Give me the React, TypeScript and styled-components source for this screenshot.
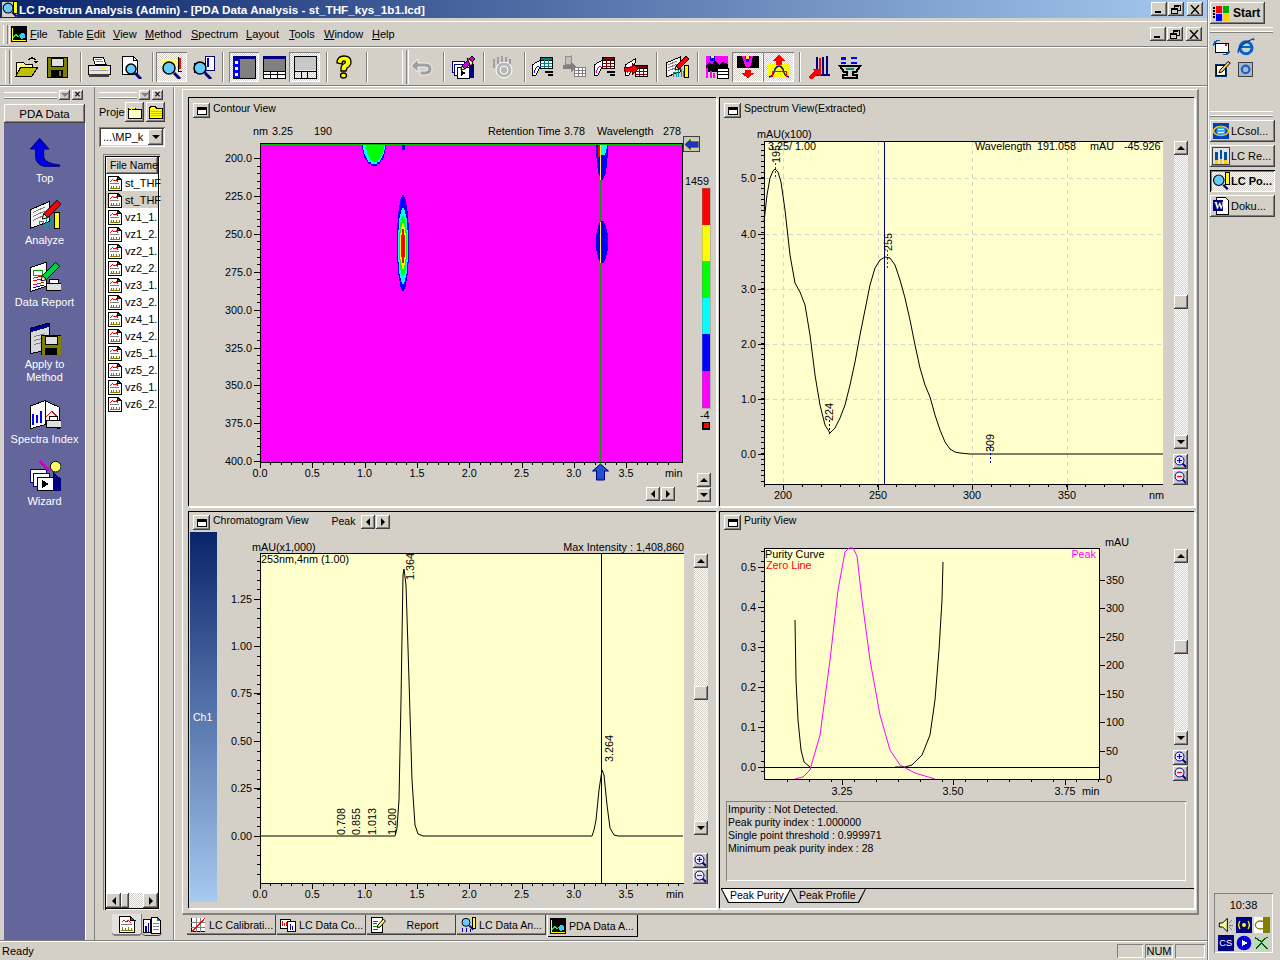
import React from "react";
import styled, { createGlobalStyle } from "styled-components";

const FACE = "#d4d0c8";
const SHADOW = "#808080";
const BEVEL = "inset -1px -1px #404040, inset 1px 1px #fff, inset -2px -2px #808080, inset 2px 2px #d4d0c8";
const SUNKEN = "inset 1px 1px #808080, inset -1px -1px #fff, inset 2px 2px #404040, inset -2px -2px #d4d0c8";
const DITHER = {
  backgroundImage: "repeating-conic-gradient(#fff 0 25%, #d4d0c8 0 50%)",
  backgroundSize: "2px 2px",
};

const GlobalStyle = createGlobalStyle({
  "html, body": {
    margin: 0,
    padding: 0,
    background: FACE,
    overflow: "hidden",
  },
  body: {
    fontFamily: '"Liberation Sans", Arial, sans-serif',
    fontSize: "11px",
    color: "#000",
  },
});

const Screen = styled.div({
  display: "grid",
  gridTemplateColumns: "1207px 73px",
  width: "1280px",
  height: "960px",
  background: FACE,
  overflow: "hidden",
});

const Main = styled.div({
  display: "flex",
  flexDirection: "column",
  minWidth: 0,
});

const TitleBar = styled.div({
  display: "flex",
  alignItems: "center",
  height: "18px",
  paddingLeft: "1px",
  background: "linear-gradient(90deg, #0a246a 0%, #a6caf0 100%)",
  flexShrink: 0,
});

const TitleText = styled.span({
  flex: 1,
  marginLeft: "1px",
  color: "#fff",
  fontWeight: "bold",
  fontSize: "11.7px",
  whiteSpace: "nowrap",
});

const WinButtons = styled.div<{ $right: number }>(props => ({
  display: "flex",
  gap: "1px",
  marginRight: `${props.$right}px`,
}));

const WinButton = styled.div({
  display: "flex",
  alignItems: "center",
  justifyContent: "center",
  width: "16px",
  height: "14px",
  background: FACE,
  boxShadow: BEVEL,
  "&:last-child": { marginLeft: "2px" },
});

const MenuBar = styled.div({
  display: "flex",
  alignItems: "center",
  height: "26px",
  marginTop: "3px",
  paddingLeft: "3px",
  borderTop: "1px solid #fff",
  borderBottom: "1px solid #808080",
  flexShrink: 0,
  boxSizing: "border-box",
});

const Grip = styled.div<{ $h: number }>(props => ({
  width: "5px",
  height: `${props.$h}px`,
  flexShrink: 0,
  borderLeft: "1px solid #fff",
  borderRight: "1px solid #808080",
  boxSizing: "border-box",
  boxShadow: "1px 0 #d4d0c8, 2px 0 #fff",
}));

const MenuIcon = styled.div({
  margin: "0 3px 0 3px",
  display: "flex",
});

const MenuItem = styled.span<{ $w: number }>(props => ({
  width: `${props.$w}px`,
  whiteSpace: "nowrap",
  "& u": { textDecoration: "underline" },
}));

const Spring = styled.div({ flex: 1 });

const ToolBar = styled.div({
  display: "flex",
  alignItems: "center",
  height: "39px",
  paddingLeft: "5px",
  borderTop: "1px solid #fff",
  borderBottom: "1px solid #808080",
  boxSizing: "border-box",
  flexShrink: 0,
});

const ToolButton = styled.div<{ $w?: number; $pressed?: boolean }>(props => ({
  display: "flex",
  alignItems: "center",
  justifyContent: "center",
  width: `${props.$w ?? 30}px`,
  height: "30px",
  flexShrink: 0,
  boxShadow: props.$pressed ? "inset 1px 1px #808080, inset -1px -1px #fff" : "none",
  ...(props.$pressed ? DITHER : {}),
}));

const ToolSep = styled.div<{ $l: number; $r: number }>(props => ({
  width: "1px",
  height: "30px",
  margin: `0 ${props.$r}px 0 ${props.$l}px`,
  background: SHADOW,
  boxShadow: "1px 0 #fff",
  flexShrink: 0,
}));

const ToolGap = styled.div<{ $w: number }>(props => ({
  width: `${props.$w}px`,
  flexShrink: 0,
}));

const Workspace = styled.div({
  flex: 1,
  display: "flex",
  minHeight: 0,
  borderTop: "1px solid #fff",
});

const PdaDock = styled.div({
  display: "flex",
  flexDirection: "column",
  width: "95px",
  padding: "3px 0 0 4px",
  boxSizing: "border-box",
  borderRight: "1px solid #808080",
  flexShrink: 0,
});

const ProjectDock = styled.div({
  display: "flex",
  flexDirection: "column",
  width: "79px",
  padding: "3px 0 0 4px",
  boxSizing: "border-box",
  borderRight: "1px solid #808080",
  flexShrink: 0,
});

const DockHead = styled.div<{ $mb: number }>(props => ({
  display: "flex",
  alignItems: "center",
  gap: "2px",
  height: "10px",
  marginBottom: `${props.$mb}px`,
}));

const DockGrip = styled.div<{ $w: number }>(props => ({
  width: `${props.$w}px`,
  height: "5px",
  borderTop: "1px solid #fff",
  borderBottom: "1px solid #808080",
  boxShadow: "inset 0 -1px #fff",
}));

const DockButton = styled.div({
  display: "flex",
  alignItems: "center",
  justifyContent: "center",
  width: "11px",
  height: "10px",
  background: FACE,
  boxShadow: BEVEL,
  fontSize: "8px",
  fontWeight: "bold",
  lineHeight: 1,
});

const PdaTitle = styled.div({
  display: "flex",
  alignItems: "center",
  justifyContent: "center",
  width: "81px",
  height: "19px",
  boxShadow: BEVEL,
  fontSize: "11.5px",
});

const PdaList = styled.div({
  flex: 1,
  width: "81px",
  display: "flex",
  flexDirection: "column",
  alignItems: "center",
  paddingTop: "14px",
  boxSizing: "border-box",
  background: "#63659b",
  boxShadow: "1px 0 #fff",
});

const PdaItem = styled.div<{ $h: number }>(props => ({
  display: "flex",
  flexDirection: "column",
  alignItems: "center",
  width: "100%",
  height: `${props.$h}px`,
  color: "#fff",
  textAlign: "center",
  lineHeight: "13px",
  fontSize: "11px",
  whiteSpace: "nowrap",
  "& svg": { marginBottom: "3px", flexShrink: 0 },
}));

const ProjectRow = styled.div({
  display: "flex",
  alignItems: "center",
  height: "20px",
  marginTop: "1px",
});

const ProjectLabel = styled.span({
  width: "26px",
  whiteSpace: "nowrap",
});

const FolderButton = styled.div({
  display: "flex",
  alignItems: "center",
  justifyContent: "center",
  width: "19px",
  height: "20px",
  marginRight: "2px",
  boxShadow: BEVEL,
});

const Combo = styled.div({
  display: "flex",
  alignItems: "center",
  justifyContent: "space-between",
  width: "66px",
  height: "20px",
  marginTop: "5px",
  padding: "2px 2px 2px 4px",
  boxSizing: "border-box",
  background: "#fff",
  boxShadow: SUNKEN,
  whiteSpace: "nowrap",
});

const ComboArrow = styled.div({
  display: "flex",
  alignItems: "center",
  justifyContent: "center",
  width: "15px",
  height: "16px",
  background: FACE,
  boxShadow: BEVEL,
  flexShrink: 0,
});

const ListFrame = styled.div({
  display: "flex",
  flexDirection: "column",
  width: "57px",
  height: "756px",
  marginTop: "7px",
  marginLeft: "4px",
  padding: "3px 2px 2px 3px",
  boxSizing: "border-box",
  background: "#fff",
  boxShadow: "inset 1px 1px #808080, inset 2px 2px #d4d0c8, inset 3px 3px #000, inset -1px -1px #fff, inset -2px -2px #000",
});

const ListHead = styled.div({
  height: "17px",
  lineHeight: "17px",
  paddingLeft: "4px",
  background: FACE,
  boxShadow: BEVEL,
  fontSize: "10.5px",
  whiteSpace: "nowrap",
  flexShrink: 0,
});

const ListBody = styled.div({
  flex: 1,
});

const ListRow = styled.div<{ $selected?: boolean }>(props => ({
  display: "flex",
  alignItems: "center",
  gap: "2px",
  height: "17px",
  paddingLeft: "1px",
  background: props.$selected ? FACE : "transparent",
  whiteSpace: "nowrap",
  "& svg": { flexShrink: 0 },
}));

const HScroll = styled.div({
  display: "flex",
  height: "15px",
  flexShrink: 0,
  background: FACE,
});

const HTrack = styled.div({
  flex: 1,
  display: "flex",
  ...DITHER,
});

const HThumb = styled.div({
  width: "8px",
  background: FACE,
  boxShadow: BEVEL,
});

const ArrowBtn = styled.div<{ $w?: number; $h?: number }>(props => ({
  display: "flex",
  alignItems: "center",
  justifyContent: "center",
  width: `${props.$w ?? 14}px`,
  height: `${props.$h ?? 14}px`,
  background: FACE,
  boxShadow: BEVEL,
  flexShrink: 0,
}));

const Tri = styled.i<{ $dir: "up" | "down" | "left" | "right"; $c?: string }>(props => {
  const c = props.$c ?? "#000";
  return {
    display: "block",
    width: 0,
    height: 0,
    borderStyle: "solid",
    borderColor: "transparent",
    borderWidth: "3px",
    ...(props.$dir === "up" && { borderBottomColor: c, borderTopWidth: 0, borderLeftWidth: "4px", borderRightWidth: "4px", borderBottomWidth: "4px" }),
    ...(props.$dir === "down" && { borderTopColor: c, borderBottomWidth: 0, borderLeftWidth: "4px", borderRightWidth: "4px", borderTopWidth: "4px" }),
    ...(props.$dir === "left" && { borderRightColor: c, borderLeftWidth: 0, borderTopWidth: "4px", borderBottomWidth: "4px", borderRightWidth: "4px" }),
    ...(props.$dir === "right" && { borderLeftColor: c, borderRightWidth: 0, borderTopWidth: "4px", borderBottomWidth: "4px", borderLeftWidth: "4px" }),
  };
});

const SideTabs = styled.div({
  display: "flex",
  height: "22px",
  marginTop: "4px",
  marginLeft: "13px",
});

const SideTab = styled.div<{ $active?: boolean }>(props => ({
  display: "flex",
  alignItems: "center",
  justifyContent: "center",
  width: props.$active ? "30px" : "20px",
  height: "22px",
  background: props.$active ? "#e4e2dc" : "transparent",
  borderBottom: props.$active ? "2px solid #808080" : "1px solid #404040",
  borderRight: props.$active ? "1px solid #808080" : "none",
  borderRadius: "0 0 4px 4px",
  boxSizing: "border-box",
}));

const MdiClient = styled.div({
  flex: 1,
  display: "flex",
  flexDirection: "column",
  padding: "2px 8px 0 8px",
  minWidth: 0,
  boxShadow: "inset 1px 0 #fff",
});

const ChildFrame = styled.div({
  display: "grid",
  gridTemplateColumns: "528px 475px",
  gridTemplateRows: "409px 397px",
  columnGap: "3px",
  rowGap: "5px",
  padding: "7px 5px 3px 5px",
  borderTop: "1px solid #fff",
  borderLeft: "1px solid #fff",
  borderRight: "2px solid #808080",
  borderBottom: "2px solid #808080",
  boxSizing: "border-box",
  height: "826px",
  width: "1017px",
  flexShrink: 0,
});

const View = styled.section({
  position: "relative",
  display: "flex",
  flexDirection: "column",
  padding: "3px 0 0 2px",
  boxSizing: "border-box",
  boxShadow: "inset 1px 1px #000, 1px 1px #fff, 2px 2px #fff",
  minWidth: 0,
});

const ViewHead = styled.header<{ $h: number; $pt: number }>(props => ({
  display: "flex",
  alignItems: "flex-start",
  gap: "3px",
  height: `${props.$h}px`,
  padding: `${props.$pt}px 0 0 3px`,
  boxSizing: "border-box",
  flexShrink: 0,
  fontSize: "10.5px",
  lineHeight: "11px",
}));

const ViewButton = styled.div({
  display: "flex",
  alignItems: "center",
  justifyContent: "center",
  width: "17px",
  height: "15px",
  boxShadow: BEVEL,
  "&::before": {
    content: '""',
    width: "10px",
    height: "8px",
    background: "#fff",
    border: "1px solid #000",
    borderTopWidth: "3px",
    boxSizing: "border-box",
  },
});

const PeakLabel = styled.span({ marginLeft: "20px", marginTop: "1px" });

const PeakArrows = styled.div({
  display: "flex",
  gap: "1px",
  marginLeft: "3px",
});

const ViewBody = styled.div({
  display: "flex",
  alignItems: "flex-start",
});

const ChartSvg = styled.svg({
  display: "block",
  flexShrink: 0,
  "& text": {
    fontFamily: '"Liberation Sans", Arial, sans-serif',
    fontSize: "10.8px",
    fill: "#000",
  },
});

const ChannelStrip = styled.div({
  display: "flex",
  alignItems: "center",
  width: "27px",
  height: "370px",
  flexShrink: 0,
  paddingLeft: "3px",
  boxSizing: "border-box",
  color: "#fff",
  fontSize: "10.5px",
  background: "linear-gradient(180deg, #0a246a 0%, #a6caf0 100%)",
});

const SideColumn = styled.div<{ $top: number; $left: number }>(props => ({
  display: "flex",
  flexDirection: "column",
  alignItems: "center",
  width: "15px",
  marginTop: `${props.$top}px`,
  marginLeft: `${props.$left}px`,
  flexShrink: 0,
}));

const Track = styled.div<{ $h: number }>(props => ({
  display: "flex",
  flexDirection: "column",
  height: `${props.$h}px`,
  width: "14px",
  ...DITHER,
}));

const TrackSpace = styled.div<{ $grow: number }>(props => ({
  flexGrow: props.$grow,
}));

const Thumb = styled.div({
  height: "14px",
  background: FACE,
  boxShadow: BEVEL,
  flexShrink: 0,
});

const ZoomBtn = styled.div<{ $mt: number }>(props => ({
  display: "flex",
  alignItems: "center",
  justifyContent: "center",
  width: "15px",
  height: "15px",
  marginTop: `${props.$mt}px`,
  background: "#c8c8dc",
  boxShadow: BEVEL,
  flexShrink: 0,
}));

const ArrowMark = styled.div({
  position: "absolute",
  left: "495px",
  top: "39px",
  display: "flex",
  alignItems: "center",
  justifyContent: "center",
  width: "17px",
  height: "16px",
  boxShadow: "inset 0 0 0 1px #404040",
  background: "#c8c8c8",
});

const HNav = styled.div({
  position: "absolute",
  left: "458px",
  top: "390px",
  display: "flex",
  gap: "1px",
});

const VNav = styled.div({
  position: "absolute",
  left: "509px",
  top: "376px",
  display: "flex",
  flexDirection: "column",
  gap: "1px",
});

const InfoBox = styled.div({
  width: "460px",
  height: "80px",
  marginLeft: "5px",
  marginTop: "3px",
  padding: "2px 0 0 2px",
  boxSizing: "border-box",
  fontSize: "10.5px",
  lineHeight: "13px",
  boxShadow: "inset 1px 1px #808080, inset -1px -1px #fff",
});

const TabStrip = styled.div({
  display: "flex",
  height: "16px",
  marginTop: "7px",
  borderTop: "1px solid #000",
});

const SlantTab = styled.div<{ $active?: boolean; $w: number }>(props => ({
  position: "relative",
  width: `${props.$w}px`,
  height: "14px",
  marginRight: "-1px",
  paddingLeft: "9px",
  boxSizing: "border-box",
  fontSize: "10.5px",
  lineHeight: "13px",
  zIndex: props.$active ? 1 : 0,
  "&::before": {
    content: '""',
    position: "absolute",
    inset: 0,
    zIndex: -2,
    background: "#000",
    clipPath: "polygon(0 0, 100% 0, calc(100% - 7px) 100%, 7px 100%)",
  },
  "&::after": {
    content: '""',
    position: "absolute",
    inset: "0 1px 1px 1px",
    zIndex: -1,
    background: props.$active ? "#fff" : FACE,
    clipPath: "polygon(0 0, 100% 0, calc(100% - 7px) 100%, 7px 100%)",
  },
}));

const DocTabs = styled.div({
  display: "flex",
  height: "21px",
  marginLeft: "5px",
  flexShrink: 0,
});

const DocTab = styled.div<{ $active?: boolean }>(props => ({
  display: "flex",
  alignItems: "center",
  gap: "3px",
  width: props.$active ? "91px" : "89px",
  height: props.$active ? "22px" : "20px",
  marginRight: "1px",
  paddingLeft: "3px",
  boxSizing: "border-box",
  whiteSpace: "nowrap",
  boxShadow: props.$active
    ? "inset 1px 0 #fff, inset -1px 0 #000, inset 0 -1px #000"
    : "inset -1px -1px #404040, inset 0 -2px #808080",
  "& svg": { flexShrink: 0 },
}));

const DocTabLabel = styled.span<{ $center?: boolean }>(props => ({
  flex: props.$center ? 1 : "none",
  textAlign: props.$center ? "center" : "left",
  fontSize: "10.6px",
}));

const StatusBar = styled.div({
  display: "flex",
  alignItems: "center",
  height: "19px",
  paddingLeft: "2px",
  borderTop: "1px solid #808080",
  boxShadow: "inset 0 1px #fff",
  flexShrink: 0,
});

const StatusPane = styled.div<{ $w: number }>(props => ({
  display: "flex",
  alignItems: "center",
  justifyContent: "center",
  width: `${props.$w}px`,
  height: "14px",
  marginRight: "2px",
  boxShadow: "inset 1px 1px #808080, inset -1px -1px #fff",
}));

const Dock = styled.aside({
  display: "flex",
  flexDirection: "column",
  padding: "2px 0 7px 3px",
  boxSizing: "border-box",
  boxShadow: "inset 1px 0 #808080, inset 2px 0 #fff",
});

const StartButton = styled.div({
  display: "flex",
  alignItems: "center",
  gap: "2px",
  width: "55px",
  height: "22px",
  paddingLeft: "3px",
  boxSizing: "border-box",
  fontWeight: "bold",
  fontSize: "12px",
  boxShadow: BEVEL,
});

const DockLine = styled.div<{ $mt: number }>(props => ({
  width: "63px",
  height: "4px",
  marginTop: `${props.$mt}px`,
  borderTop: "1px solid #fff",
  borderBottom: "1px solid #808080",
  boxShadow: "inset 0 -1px #fff",
}));

const QuickGrid = styled.div({
  display: "grid",
  gridTemplateColumns: "24px 24px",
  gridAutoRows: "22px",
  marginTop: "3px",
  justifyItems: "center",
  alignItems: "center",
  width: "48px",
});

const TaskButton = styled.div<{ $active?: boolean }>(props => ({
  display: "flex",
  alignItems: "center",
  gap: "1px",
  width: "65px",
  height: "22px",
  marginTop: "3px",
  paddingLeft: "2px",
  boxSizing: "border-box",
  whiteSpace: "nowrap",
  fontWeight: props.$active ? "bold" : "normal",
  boxShadow: props.$active ? "inset 1px 1px #000, inset -1px -1px #fff, inset 2px 2px #808080" : BEVEL,
  ...(props.$active ? DITHER : {}),
}));

const Tray = styled.div({
  marginTop: "auto",
  marginLeft: "4px",
  width: "59px",
  height: "60px",
  padding: "6px 3px 0 3px",
  boxSizing: "border-box",
  boxShadow: "inset 1px 1px #808080, inset -1px -1px #fff",
  textAlign: "center",
});

const TrayIcons = styled.div({
  display: "grid",
  gridTemplateColumns: "repeat(3, 18px)",
  gridAutoRows: "18px",
  marginTop: "5px",
  justifyItems: "center",
  alignItems: "center",
});

/* little drawings, strokes stay about 1px whatever the size */
const Ico: React.FC<{ s?: number; children: React.ReactNode }> = ({ s = 24, children }) => (
  <svg width={s} height={s} viewBox="0 0 24 24" shapeRendering="crispEdges">
    <g strokeWidth={24 / s}>{children}</g>
  </svg>
);

const Mag: React.FC<{ x: number; y: number; r?: number }> = ({ x, y, r = 5 }) => (
  <g>
    <path d={`M${x + r - 1} ${y + r - 1}l6 6`} stroke="#000080" strokeWidth="3" shapeRendering="auto" />
    <circle cx={x} cy={y} r={r} fill="#66ccff" stroke="#000" strokeWidth="1.5" shapeRendering="auto" />
  </g>
);

const Sheet: React.FC<{ x: number; y: number; c: string }> = ({ x, y, c }) => (
  <g>
    <rect x={x} y={y} width="12" height="11" fill="#fff" stroke="#000" />
    <rect x={x} y={y} width="12" height="3" fill={c} stroke="#000" />
    <path d={`M${x + 4} ${y + 3}v8M${x + 8} ${y + 3}v8M${x} ${y + 6}h12M${x} ${y + 9}h12`} stroke={c} />
  </g>
);

const Wedge: React.FC<{ c: string }> = ({ c }) => (
  <g>
    <path d="M1 20V10l10-6v4l-6 12z" fill="#fff" stroke="#000" />
    <path d="M3 18q2-8 5-6" stroke={c} fill="none" />
  </g>
);

const Pencil: React.FC<{ x?: number; y?: number; c?: string }> = ({ x = 0, y = 0, c = "#ff0000" }) => (
  <g transform={`translate(${x} ${y})`} shapeRendering="auto">
    <path d="M0 10L10 0l3 3L3 13z" fill={c} stroke="#000" />
    <path d="M0 10l3 3-4 1z" fill="#ffff99" stroke="#000" />
  </g>
);

const FolderOpen = () => (
  <Ico>
    <path d="M1 7h7l2 2h7v3H6L1 20z" fill="#ffff99" stroke="#000" />
    <path d="M1 21l5-9h17l-6 9z" fill="#c0c000" stroke="#000" />
    <path d="M13 5q4-4 8 0" fill="none" stroke="#000" strokeWidth="1.5" />
    <path d="M18 6h5l-2 3z" fill="#000" />
  </Ico>
);

const Floppy = ({ s = 24 }: { s?: number }) => (
  <Ico s={s}>
    <rect x="2" y="2" width="20" height="20" fill="#808000" stroke="#000" />
    <rect x="6" y="3" width="12" height="8" fill="#e0e0e0" stroke="#000" />
    <rect x="6" y="15" width="12" height="7" fill="#000" />
    <rect x="14" y="16" width="2" height="5" fill="#808000" />
  </Ico>
);

const Printer = () => (
  <Ico>
    <path d="M6 2h10l3 7H8z" fill="#fff" stroke="#000" />
    <path d="M8 4h7M9 6h7" stroke="#808080" />
    <rect x="1" y="10" width="22" height="9" fill="#e8e8e8" stroke="#000" />
    <rect x="2" y="19" width="20" height="3" fill="#404040" />
    <rect x="3" y="15" width="18" height="1" fill="#a0a0a0" />
    <rect x="14" y="12" width="4" height="2" fill="#ffff00" />
  </Ico>
);

const Preview = () => (
  <Ico>
    <path d="M4 1h11l4 4v14H4z" fill="#fff" stroke="#000" />
    <path d="M15 1v4h4" fill="none" stroke="#000" />
    <Mag x={13} y={14} r={5} />
  </Ico>
);

const AnalysisA = () => (
  <Ico>
    <rect x="2" y="4" width="15" height="6" fill="#ffff66" />
    <path d="M18 2v14h4" stroke="#000" fill="none" />
    <rect x="19" y="3" width="2" height="11" fill="#ff0000" />
    <Mag x={9} y={13} r={6} />
  </Ico>
);

const AnalysisB = () => (
  <Ico>
    <rect x="14" y="1" width="9" height="14" fill="#fff" stroke="#000080" />
    <rect x="16" y="3" width="2" height="9" fill="#0000ff" />
    <path d="M3 8h11v9H3z" fill="#fff" stroke="#000" />
    <Mag x={9} y={13} r={6} />
  </Ico>
);

const LayoutA = () => (
  <Ico>
    <rect x="1" y="1" width="22" height="22" fill="#808080" stroke="#000" />
    <rect x="1" y="1" width="22" height="3" fill="#000080" />
    <rect x="1" y="4" width="7" height="19" fill="#0000ff" />
    <rect x="3" y="6" width="3" height="3" fill="#fff" />
    <rect x="3" y="12" width="3" height="3" fill="#fff" />
    <rect x="3" y="18" width="3" height="3" fill="#fff" />
  </Ico>
);

const LayoutB = () => (
  <Ico>
    <rect x="1" y="1" width="22" height="22" fill="#808080" stroke="#000" />
    <rect x="1" y="1" width="22" height="3" fill="#000080" />
    <rect x="1" y="16" width="22" height="7" fill="#fff" stroke="#000" />
    <path d="M8 16v7M15 16v7M1 19h22" stroke="#000" />
  </Ico>
);

const LayoutC = () => (
  <Ico>
    <rect x="1" y="1" width="22" height="22" fill="none" stroke="#000" />
    <rect x="2" y="2" width="21" height="13" fill="#c8c8c8" />
    <rect x="1" y="16" width="22" height="7" fill="none" stroke="#000" />
    <path d="M8 16v7M14 16v7" stroke="#000" />
  </Ico>
);

const Help = () => (
  <Ico>
    <path d="M5 8q0-7 7-7t7 6q0 4-4 6l-1 3h-5v-3q0-3 4-5 1-2-1-2t-2 3z" fill="#ffff00" stroke="#000" strokeWidth="1.3" shapeRendering="auto" />
    <ellipse cx="11.5" cy="20.5" rx="3" ry="2.5" fill="#ffff00" stroke="#000" strokeWidth="1.3" shapeRendering="auto" />
  </Ico>
);

const Undo = () => (
  <Ico>
    <path d="M1 11l7-7v4h7q7 0 7 6t-7 6h-5v-4h5q3 0 3-2t-3-2H8v5z" fill="#a0a0a0" stroke="#fff" strokeWidth="0.8" shapeRendering="auto" />
  </Ico>
);

const Stacks = () => (
  <Ico>
    <rect x="1" y="6" width="12" height="11" fill="#fff" stroke="#000080" />
    <rect x="3" y="9" width="12" height="11" fill="#fff" stroke="#000080" />
    <rect x="6" y="12" width="12" height="11" fill="#fff" stroke="#000" />
    <path d="M10 15l5 3-5 3z" fill="#000" />
    <path d="M18 5l5 5v13h-5z" fill="#000080" />
    <Pencil x={11} y={1} c="#cc00cc" />
    <path d="M16 3l6 4-2 5z" fill="#ffff66" stroke="#000" shapeRendering="auto" />
  </Ico>
);

const GearDisabled = () => (
  <Ico>
    <circle cx="13" cy="15" r="8" fill="#b8b8b8" stroke="#fff" shapeRendering="auto" />
    <circle cx="13" cy="15" r="4" fill="none" stroke="#fff" shapeRendering="auto" />
    <path d="M3 4v9M7 2v7M11 1v6M15 2v5M19 4v5" stroke="#a0a0a0" strokeWidth="2" />
  </Ico>
);

const CurveTable = ({ c, curve }: { c: string; curve: string }) => (
  <Ico>
    <Wedge c={curve} />
    <Sheet x={9} y={2} c={c} />
    <path d="M14 17h8M17 20h5" stroke="#000" strokeWidth="2" />
  </Ico>
);

const GrayTable = () => (
  <Ico>
    <path d="M3 2l6-1v8H3z" fill="#c0c0c0" stroke="#909090" />
    <path d="M1 10h8V7l5 5-5 5v-3H1z" fill="#808080" />
    <rect x="12" y="12" width="11" height="9" fill="#fff" stroke="#808080" />
    <path d="M16 12v9M20 12v9M12 15h11M12 18h11" stroke="#808080" />
  </Ico>
);

const ArrowTable = () => (
  <Ico>
    <Wedge c="#cc00cc" />
    <Sheet x={11} y={10} c="#800000" />
    <path d="M0 12h8V8l6 6-6 6v-4H0z" fill="#ff0000" stroke="#000" strokeWidth="0.6" />
  </Ico>
);

const ReportPencil = ({ s = 24 }: { s?: number }) => (
  <Ico s={s}>
    <path d="M1 8L15 2v15L1 22z" fill="#f4f4f4" stroke="#000" />
    <path d="M3 10l9-4M3 13l9-4M3 16l9-4" stroke="#808080" />
    <path d="M8 22v-5h3v5M13 22v-8h3v8M18 22v-6h3v6" fill="none" stroke="#009999" />
    <rect x="19" y="10" width="4" height="12" fill="#ffff00" stroke="#000" />
    <Pencil x={11} y={1} />
  </Ico>
);

const ContourTable = () => (
  <Ico>
    <rect x="1" y="1" width="22" height="9" fill="#ff00ff" />
    <path d="M1 10l3-3 3 3 3-5 4 5 4-3 5 2v8H1z" fill="#000" />
    <rect x="5" y="1" width="5" height="5" fill="#0000ff" />
    <rect x="6" y="1" width="3" height="2" fill="#ffff00" />
    <rect x="12" y="13" width="11" height="10" fill="#fff" stroke="#000" />
    <path d="M12 16h11M12 19h11" stroke="#000" />
    <path d="M2 23v-10M6 23v-7M9 23v-5" stroke="#ff00ff" strokeWidth="1.5" />
  </Ico>
);

const ContourDown = () => (
  <Ico>
    <rect x="1" y="1" width="22" height="12" fill="#000" />
    <path d="M6 1h11l-2 10q-3 3-6 0z" fill="#ff00ff" />
    <path d="M9 1h5l-1 6h-3z" fill="#0000ff" />
    <path d="M10 1h3v3h-3z" fill="#ffff00" />
    <path d="M9 15h6v3h4l-7 5-7-5h4z" fill="#ff0000" />
  </Ico>
);

const PeakUp = () => (
  <Ico>
    <rect x="1" y="9" width="22" height="14" fill="#ffff00" />
    <path d="M2 22q5-1 6-8 2-3 4-3t4 3q1 7 6 8" fill="none" stroke="#000080" strokeWidth="1.4" shapeRendering="auto" />
    <path d="M5 22v-6h14v6" fill="none" stroke="#ff0000" />
    <path d="M12 0l7 6h-4v4H9V6H5z" fill="#ff0000" />
  </Ico>
);

const ArrowBars = () => (
  <Ico>
    <path d="M10 2v18M16 2v18M20 1v19M8 20h15" stroke="#000080" fill="none" strokeWidth="1.3" />
    <path d="M13 3v18" stroke="#ff0000" strokeWidth="1.3" />
    <path d="M1 22l6-6-2-2h7v7l-2-2-6 6z" fill="#ff0000" />
  </Ico>
);

const Scope = () => (
  <Ico>
    <path d="M3 2h5v3H3zM13 2h6v2h-6zM3 7h5v2H3zM13 7h6v2h-6z" fill="#0000ff" />
    <path d="M2 11h20l-4 6h-3v3h4v3H5v-3h4v-3H6z" fill="none" stroke="#000" strokeWidth="2" />
    <path d="M8 14h8" stroke="#008080" strokeWidth="2" />
  </Ico>
);

const LogoTile = ({ s = 16 }: { s?: number }) => (
  <Ico s={s}>
    <rect width="24" height="24" fill="#000" />
    <path d="M2 3v19h20" stroke="#ffff00" fill="none" strokeWidth="2" />
    <path d="M3 18l4-5 4 3 5-5" stroke="#00ff00" fill="none" strokeWidth="2" />
    <circle cx="17" cy="15" r="4" fill="#33ccff" />
  </Ico>
);

const TopArrow = () => (
  <Ico s={32}>
    <path d="M1 9L8 1l7 8h-4v6q1 5 12 6v1H11q-6-2-6-7V9z" fill="#0000e0" stroke="#000080" shapeRendering="auto" />
  </Ico>
);

const DataReport = () => (
  <Ico s={32}>
    <path d="M1 5l12-4v18L1 23z" fill="#fff" stroke="#000" />
    <rect x="3" y="7" width="7" height="4" fill="#fff" stroke="#00aa00" />
    <path d="M3 13l8-2M3 15l8-2M3 18l8-2" stroke="#ff0000" />
    <path d="M3 20l8-2" stroke="#0000ff" />
    <rect x="13" y="17" width="11" height="5" fill="#e0e0e0" stroke="#000" />
    <rect x="15" y="14" width="7" height="3" fill="#fff" stroke="#000" />
    <Pencil x={10} y={1} c="#00cc44" />
  </Ico>
);

const ApplyMethod = () => (
  <Ico s={32}>
    <path d="M1 4L15 0v20L1 23z" fill="#d8d8d8" stroke="#000" />
    <path d="M1 4L15 0v3L1 7z" fill="#000080" />
    <path d="M4 10l8-2M4 13l8-2M4 16l8-2" stroke="#808080" />
    <rect x="9" y="9" width="15" height="15" fill="#808000" stroke="#000" />
    <rect x="12" y="10" width="9" height="6" fill="#e0e0e0" stroke="#000" />
    <rect x="12" y="19" width="9" height="5" fill="#000" />
  </Ico>
);

const SpectraIndex = () => (
  <Ico s={32}>
    <path d="M1 6l11-4v18L1 23z" fill="#fff" stroke="#000" />
    <path d="M3 20v-8M6 19v-6M9 19v-9" stroke="#0000ff" strokeWidth="1.2" />
    <path d="M12 2l11 5v16l-11-3z" fill="#fff" stroke="#000" />
    <path d="M13 14l4-4 4 4" stroke="#ff0000" fill="none" />
    <rect x="13" y="17" width="11" height="5" fill="#e0e0e0" stroke="#000" />
    <rect x="15" y="14" width="6" height="3" fill="#fff" stroke="#000" />
  </Ico>
);

const Wizard = () => (
  <Ico s={32}>
    <rect x="1" y="7" width="12" height="10" fill="#fff" stroke="#000080" />
    <rect x="3" y="10" width="12" height="10" fill="#fff" stroke="#000080" />
    <rect x="6" y="13" width="12" height="10" fill="#fff" stroke="#000" />
    <path d="M10 15l5 3-5 3z" fill="#000" />
    <path d="M18 9l6 5v9h-6z" fill="#000080" />
    <circle cx="20" cy="5" r="4" fill="#ffff66" stroke="#000" shapeRendering="auto" />
    <path d="M8 1l7 7" stroke="#cc00cc" strokeWidth="2" />
  </Ico>
);

const FileGlyph = ({ s = 16 }: { s?: number }) => (
  <Ico s={s}>
    <path d="M2 2h14l6 5v16H2z" fill="#fff" stroke="#000" />
    <path d="M16 2v5h6z" fill="#008080" stroke="#000" />
    <path d="M4 12h14" stroke="#808080" />
    <path d="M5 10l3-3 3 2 3-2 3 3" fill="none" stroke="#ff0000" />
    <path d="M6 20v-4M10 20v-3M14 20v-4M18 20v-3M4 20h16" stroke="#808000" />
  </Ico>
);

const BarsDoc = () => (
  <Ico s={18}>
    <path d="M1 5h9v17H1z" fill="#fff" stroke="#000" />
    <path d="M4 21v-8M7 21v-12" stroke="#0000aa" strokeWidth="2" />
    <path d="M11 2h8l4 4v17H11z" fill="#fff" stroke="#000" />
    <path d="M19 2v4h4z" fill="#008080" />
    <path d="M13 10h8M13 14h8M13 18h8" stroke="#808080" />
  </Ico>
);

const NewFolder = () => (
  <Ico s={18}>
    <path d="M3 8h17v13H3z" fill="#ffffcc" stroke="#000" />
    <path d="M3 8l2-2h6l2 2" fill="#ffff00" stroke="#000" />
    <path d="M7 1l1 4 4 1-4 1-1 4-1-4-4-1 4-1z" fill="#ffff00" />
  </Ico>
);

const OpenFolder = () => (
  <Ico s={18}>
    <path d="M3 7l2-2h6l2 2h8v14H3z" fill="#ffff00" stroke="#000" />
    <path d="M5 11h15M5 14h15M5 17h15" stroke="#c0c000" />
  </Ico>
);

const Calib = () => (
  <Ico s={16}>
    <rect x="1" y="1" width="22" height="22" fill="#fff" />
    <path d="M2 1v21h21" stroke="#000" fill="none" strokeWidth="2" />
    <path d="M2 8h21M2 15h21M9 1v21M16 1v21" stroke="#808080" />
    <path d="M3 22L22 2" stroke="#ff0000" strokeWidth="2" />
  </Ico>
);

const DataCo = () => (
  <Ico s={16}>
    <rect x="1" y="3" width="14" height="14" fill="#fff" stroke="#000" />
    <path d="M3 14v-8M6 14v-5M9 14v-7" stroke="#ff0000" strokeWidth="1.5" />
    <rect x="11" y="7" width="12" height="14" fill="#fff" stroke="#000" />
    <path d="M15 19v-8M18 19v-5" stroke="#0000aa" strokeWidth="1.5" />
  </Ico>
);

const ReportGlyph = () => (
  <Ico s={16}>
    <rect x="2" y="1" width="16" height="22" fill="#fff" stroke="#000" />
    <path d="M5 6h7M5 10h5" stroke="#ff0000" />
    <path d="M5 14h7M5 18h7" stroke="#008000" />
    <path d="M12 12l8-9 3 3-8 9-4 1z" fill="#ffff66" stroke="#000" shapeRendering="auto" />
  </Ico>
);

const AnalysisTab = () => (
  <Ico s={16}>
    <rect x="18" y="1" width="5" height="16" fill="#ffff00" stroke="#000" />
    <Mag x={9} y={8} r={6} />
    <path d="M3 22v-5M9 22v-5M15 22v-4" stroke="#0000aa" />
  </Ico>
);

const StartFlag = () => (
  <Ico s={18}>
    <path d="M4 3h8v9H4z" fill="#ff0000" />
    <path d="M13 3h8v9h-8z" fill="#00aa00" />
    <path d="M4 13h8v9H4z" fill="#0000ff" />
    <path d="M13 13h8v9h-8z" fill="#ffcc00" />
    <path d="M0 5h3M0 9h3M0 13h3M0 17h3" stroke="#000" strokeWidth="2" />
  </Ico>
);

const MailGlyph = () => (
  <Ico s={18}>
    <rect x="3" y="7" width="18" height="12" fill="#fff" stroke="#000" />
    <rect x="16" y="8" width="3" height="3" fill="#ff0000" />
    <path d="M1 10q0-7 8-7" stroke="#0066cc" strokeWidth="2" fill="none" />
    <path d="M22 17q-1 6-9 5" stroke="#0066cc" strokeWidth="2" fill="none" />
  </Ico>
);

const IeGlyph = () => (
  <Ico s={18}>
    <ellipse cx="12" cy="13" rx="8" ry="8" fill="none" stroke="#0066cc" strokeWidth="4" shapeRendering="auto" />
    <path d="M5 12h14" stroke="#0066cc" strokeWidth="3" />
    <path d="M2 20Q-1 14 12 6t10-3" fill="none" stroke="#003399" strokeWidth="1.5" shapeRendering="auto" />
  </Ico>
);

const NoteGlyph = () => (
  <Ico s={18}>
    <rect x="2" y="5" width="17" height="17" fill="#003366" />
    <rect x="5" y="7" width="11" height="13" fill="#ffffee" stroke="#000" />
    <path d="M9 14l11-12 3 2-11 12-4 1z" fill="#ffcc66" stroke="#000" shapeRendering="auto" />
  </Ico>
);

const CamGlyph = () => (
  <Ico s={18}>
    <rect x="2" y="3" width="19" height="19" fill="#a8b8c8" stroke="#404040" />
    <circle cx="11.5" cy="12.5" r="5" fill="none" stroke="#2060c0" strokeWidth="3" shapeRendering="auto" />
  </Ico>
);

const LcSol = () => (
  <Ico s={18}>
    <rect x="1" y="1" width="22" height="22" fill="#0040c0" />
    <ellipse cx="12" cy="12" rx="10" ry="6" fill="none" stroke="#ffcc00" strokeWidth="2" shapeRendering="auto" />
    <circle cx="12" cy="12" r="6" fill="#33aaff" shapeRendering="auto" />
    <path d="M8 10h8M8 14h8" stroke="#fff" />
  </Ico>
);

const LcRe = () => (
  <Ico s={18}>
    <rect x="1" y="1" width="22" height="22" fill="#e0e0e0" stroke="#404040" />
    <path d="M6 22V6M12 22V4M18 22V7" stroke="#0050a0" strokeWidth="3" />
    <path d="M6 22v-5M12 22v-6M18 22v-5" stroke="#ffcc00" strokeWidth="3" />
  </Ico>
);

const LcPo = () => (
  <Ico s={18}>
    <rect x="18" y="1" width="5" height="16" fill="#ffff00" stroke="#000" />
    <Mag x={9} y={11} r={7} />
  </Ico>
);

const WordGlyph = () => (
  <Ico s={18}>
    <path d="M6 1h12l4 4v18H6z" fill="#fff" stroke="#000" />
    <rect x="1" y="4" width="14" height="14" fill="#000080" />
    <text x="3" y="16" fontSize="13" fontWeight="bold" fill="#fff" fontFamily="Liberation Serif">W</text>
  </Ico>
);

const VolumeGlyph = () => (
  <Ico s={16}>
    <path d="M2 9h5l7-7v20l-7-7H2z" fill="#ffff99" stroke="#000" shapeRendering="auto" />
    <path d="M17 8l4-3M17 12h5M17 16l4 3" stroke="#808080" />
  </Ico>
);

const SignalGlyph = () => (
  <Ico s={16}>
    <rect width="24" height="24" fill="#000080" />
    <circle cx="12" cy="12" r="3" fill="#ffff00" shapeRendering="auto" />
    <path d="M6 6q-4 6 0 12M18 6q4 6 0 12" stroke="#ffff00" strokeWidth="2" fill="none" shapeRendering="auto" />
  </Ico>
);

const NvidiaGlyph = () => (
  <Ico s={16}>
    <rect width="24" height="24" fill="#fff" />
    <rect x="13" y="0" width="11" height="24" fill="#808000" />
    <ellipse cx="10" cy="12" rx="8" ry="6" fill="none" stroke="#808000" strokeWidth="2" shapeRendering="auto" />
  </Ico>
);

const CsGlyph = () => (
  <Ico s={16}>
    <rect width="24" height="24" fill="#000080" />
    <text x="2" y="17" fontSize="14" fill="#fff" fontFamily="Liberation Sans">CS</text>
  </Ico>
);

const PlayGlyph = () => (
  <Ico s={16}>
    <circle cx="12" cy="12" r="11" fill="#0000dd" shapeRendering="auto" />
    <path d="M9 7l8 5-8 5z" fill="#fff" />
  </Ico>
);

const MapGlyph = () => (
  <Ico s={16}>
    <rect width="24" height="24" fill="#c0d8c0" />
    <path d="M2 4l9 6 9-7M3 20l8-8 10 9" stroke="#006000" strokeWidth="2" fill="none" />
  </Ico>
);

const ZoomGlyph: React.FC<{ plus?: boolean }> = ({ plus }) => (
  <svg width="13" height="13" viewBox="0 0 13 13">
    <path d="M8 8l4 4" stroke="#000080" strokeWidth="2" />
    <circle cx="5.5" cy="5.5" r="4.5" fill="#e8e8f8" stroke="#000080" />
    <path d={plus ? "M3 5.5h5M5.5 3v5" : "M3 5.5h5"} stroke={plus ? "#0000ff" : "#ff0000"} strokeWidth="1.2" />
  </svg>
);

const WinGlyph: React.FC<{ kind: "min" | "max" | "close" }> = ({ kind }) => (
  <svg width="10" height="9" viewBox="0 0 10 9" shapeRendering="crispEdges">
    {kind === "min" && <rect x="1" y="6" width="6" height="2" fill="#000" />}
    {kind === "max" && (
      <path d="M3 .5h6v5H7M3 .5v2M.5 3h6v5h-6zM1 4h5M3 1h5" fill="none" stroke="#000" />
    )}
    {kind === "close" && <path d="M1 0l8 9M9 0l-8 9" stroke="#000" strokeWidth="1.4" shapeRendering="auto" />}
  </svg>
);

/* chart data */
const toPath = (pts: number[][]) => "M" + pts.map(p => p.join(" ")).join("L");

const spectrumCurve = [
  [764, 222], [767, 195], [770, 178], [773, 171], [775, 169], [778, 172], [781, 182], [785, 210], [790, 255], [795, 283],
  [800, 292], [805, 305], [810, 335], [815, 375], [820, 405], [825, 425], [830, 433], [835, 428], [840, 418],
  [845, 405], [850, 385], [855, 362], [860, 335], [865, 310], [870, 285], [875, 268], [880, 260], [885, 257],
  [890, 258], [895, 265], [900, 280], [905, 298], [910, 320], [915, 345], [920, 368], [925, 385], [930, 397],
  [935, 415], [940, 430], [945, 442], [950, 449], [955, 452], [960, 453], [970, 454], [1163, 454],
];

const chromCurve = [
  [260, 836], [395, 836], [397, 828], [399, 800], [401, 700], [403, 575], [404, 569], [406, 585], [409, 680],
  [412, 780], [415, 825], [418, 834], [423, 836], [592, 836], [594, 830], [596, 820], [599, 790], [602, 770],
  [604, 775], [607, 805], [610, 828], [614, 835], [618, 836], [683, 836],
];

const purityLeft = [[795, 620], [796, 680], [798, 720], [801, 750], [804, 762], [810, 767]];
const purityRight = [
  [895, 767], [905, 767], [912, 765], [922, 755], [930, 735], [935, 700], [939, 650], [942, 600], [943, 562],
];
const purityPeak = [
  [795, 779], [803, 777], [810, 770], [820, 735], [830, 660], [838, 590], [845, 552], [849, 548], [853, 548], [857, 556], [862, 600],
  [870, 660], [880, 715], [890, 750], [900, 765], [915, 773], [935, 779],
];

const xLabels = ["0.0", "0.5", "1.0", "1.5", "2.0", "2.5", "3.0", "3.5"];

const blob = (cx: number, cy: number, rx: number, ry: number, fill: string, key: string) => {
  const rows: React.ReactNode[] = [];
  for (let y = cy - ry; y < cy + ry; y += 2) {
    const t = (y + 1 - cy) / ry;
    const half = Math.round(rx * Math.sqrt(Math.max(0, 1 - t * t)));
    if (half > 0) rows.push(<rect key={`${key}${y}`} x={cx - half} y={y} width={half * 2} height={2} fill={fill} />);
  }
  return rows;
};

const ContourChart = () => (
  <ChartSvg width="525" height="386" viewBox="190 120 525 386" shapeRendering="crispEdges">
    <defs>
      <clipPath id="contour-clip"><rect x="260" y="143" width="422" height="319" /></clipPath>
    </defs>
    <text x="253" y="135">nm</text>
    <text x="272" y="135">3.25</text>
    <text x="314" y="135">190</text>
    <text x="488" y="135">Retention Time</text>
    <text x="564" y="135">3.78</text>
    <text x="597" y="135">Wavelength</text>
    <text x="663" y="135">278</text>
    <rect x="260" y="143" width="422" height="319" fill="#ff00ff" />
    <g clipPath="url(#contour-clip)">
      {blob(374, 143, 12, 23, "#0000ff", "a")}
      {blob(374, 143, 11, 21, "#00ffff", "b")}
      {blob(375, 143, 9, 19, "#00ff00", "c")}
      <rect x="366" y="143" width="17" height="1" fill="#ff0000" />
      <rect x="402" y="143" width="3" height="7" fill="#0000ff" />
      {blob(403, 243, 6, 48, "#0000ff", "d")}
      {blob(403, 246, 5, 38, "#00ffff", "e")}
      {blob(403, 246, 4, 30, "#00ff00", "f")}
      {blob(403, 246, 3, 23, "#ffff00", "g")}
      {blob(403, 246, 2, 17, "#ff0000", "h")}
      {blob(602, 143, 6, 37, "#0000ff", "i")}
      {blob(603, 143, 4, 12, "#00ffff", "j")}
      <rect x="598" y="145" width="2" height="12" fill="#ff0000" />
      {blob(602, 242, 6, 21, "#0000ff", "k")}
      <rect x="600" y="143" width="1" height="37" fill="#ffff00" />
      <rect x="600" y="222" width="1" height="41" fill="#ffff00" />
      <rect x="600" y="180" width="1" height="42" fill="#00a000" />
      <rect x="600" y="263" width="1" height="199" fill="#00a000" />
    </g>
    <rect x="260.5" y="143.5" width="422" height="319" fill="none" stroke="#000" />
    <rect x="261" y="144" width="421" height="1" fill="#00c000" />
    {["200.0", "225.0", "250.0", "275.0", "300.0", "325.0", "350.0", "375.0", "400.0"].map((label, i) => {
      const y = 158 + i * 37.9;
      return (
        <g key={label}>
          <path d={`M254 ${Math.round(y) + 0.5}h6`} stroke="#000" />
          <text x="252" y={y + 4} textAnchor="end">{label}</text>
        </g>
      );
    })}
    {Array.from({ length: 41 }).map((_, i) => (
      <path key={i} d={`M257 ${Math.round(158 + i * 7.58) + 0.5}h3`} stroke="#000" />
    ))}
    {xLabels.map((label, i) => {
      const x = 260 + i * 52.3;
      return (
        <g key={label}>
          <path d={`M${Math.round(x) + 0.5} 462v6`} stroke="#000" />
          <text x={x} y="477" textAnchor="middle">{label}</text>
        </g>
      );
    })}
    {Array.from({ length: 40 }).map((_, i) => (
      <path key={i} d={`M${Math.round(260 + i * 10.46) + 0.5} 462v3`} stroke="#000" />
    ))}
    <text x="665" y="477">min</text>
    <path d="M600.5 464l8 7h-4v9h-8v-9h-4z" fill="#2050d0" stroke="#000080" shapeRendering="auto" />
    <text x="685" y="185">1459</text>
    {["#ff0000", "#ffff00", "#00ff00", "#00ffff", "#0000ff", "#ff00ff"].map((c, i) => (
      <rect key={c} x="702" y={188 + i * 36.6} width="8" height="37" fill={c} />
    ))}
    <rect x="702.5" y="188.5" width="8" height="220" fill="none" stroke="#808080" strokeOpacity="0.4" />
    <text x="700" y="419">-4</text>
    <rect x="702" y="422" width="8" height="8" fill="#000" />
    <rect x="704" y="423" width="5" height="5" fill="#ff0000" />
  </ChartSvg>
);

const SpectrumChart = () => (
  <ChartSvg width="451" height="386" viewBox="721 120 451 386" shapeRendering="crispEdges">
    <rect x="764" y="141" width="399" height="343" fill="#ffffcc" />
    {[783, 878, 972, 1067, 1163].map(x => (
      <path key={x} d={`M${x + 0.5} 142V484`} stroke="#d8d0dc" strokeDasharray="4 4" />
    ))}
    {[178, 234, 289, 344, 399].map(y => (
      <path key={y} d={`M765 ${y + 0.5}H1163`} stroke="#d8d0dc" strokeDasharray="4 4" />
    ))}
    <path d="M764.5 141V484.5H1163" fill="none" stroke="#000" />
    <path d="M764 141.5H1163" stroke="#000" />
    <text x="757" y="138">mAU(x100)</text>
    <text x="768" y="150">3.25/ 1.00</text>
    <text x="975" y="150">Wavelength</text>
    <text x="1037" y="150">191.058</text>
    <text x="1090" y="150">mAU</text>
    <text x="1124" y="150">-45.926</text>
    {[["5.0", 178], ["4.0", 234], ["3.0", 289], ["2.0", 344], ["1.0", 399], ["0.0", 454]].map(([l, y]) => (
      <g key={l}>
        <path d={`M758 ${Number(y) + 0.5}h6`} stroke="#000" />
        <text x="756" y={Number(y) + 4} textAnchor="end">{l}</text>
      </g>
    ))}
    {Array.from({ length: 62 }).map((_, i) => (
      <path key={i} d={`M761 ${Math.round(144 + i * 5.52) + 0.5}h3`} stroke="#000" />
    ))}
    {[["200", 783], ["250", 878], ["300", 972], ["350", 1067]].map(([l, x]) => (
      <g key={l}>
        <path d={`M${Number(x) + 0.5} 484v6`} stroke="#000" />
        <text x={x} y="499" textAnchor="middle">{l}</text>
      </g>
    ))}
    {Array.from({ length: 21 }).map((_, i) => (
      <path key={i} d={`M${Math.round(764 + i * 18.9) + 0.5} 484v3`} stroke="#000" />
    ))}
    <text x="1149" y="499">nm</text>
    <path d="M884.5 141V484" stroke="#000080" />
    <path d={toPath(spectrumCurve)} fill="none" stroke="#000" shapeRendering="auto" />
    <path d="M775.5 163v16" stroke="#cc0000" strokeDasharray="2 2" />
    <path d="M829.5 420v16" stroke="#000" strokeDasharray="2 2" />
    <path d="M887.5 250v18" stroke="#cc0000" strokeDasharray="2 2" />
    <path d="M990.5 445v20" stroke="#0000cc" strokeDasharray="2 2" />
    <text transform="rotate(-90 780 163)" x="780" y="163">195</text>
    <text transform="rotate(-90 833 421)" x="833" y="421">224</text>
    <text transform="rotate(-90 892 251)" x="892" y="251">255</text>
    <text transform="rotate(-90 994 452)" x="994" y="452">309</text>
  </ChartSvg>
);

const ChromChart = () => (
  <ChartSvg width="475" height="373" viewBox="217 532 475 373" shapeRendering="crispEdges">
    <rect x="260" y="553" width="424" height="330" fill="#ffffcc" />
    <path d="M260.5 553V883.5H684" fill="none" stroke="#000" />
    <path d="M260 553.5H684" stroke="#000" />
    <text x="252" y="551">mAU(x1,000)</text>
    <text x="684" y="551" textAnchor="end">Max Intensity : 1,408,860</text>
    <text x="261" y="563">253nm,4nm (1.00)</text>
    {[["1.25", 599], ["1.00", 646], ["0.75", 693], ["0.50", 741], ["0.25", 788], ["0.00", 836]].map(([l, y]) => (
      <g key={l}>
        <path d={`M254 ${Number(y) + 0.5}h6`} stroke="#000" />
        <text x="252" y={Number(y) + 4} textAnchor="end">{l}</text>
      </g>
    ))}
    {Array.from({ length: 34 }).map((_, i) => (
      <path key={i} d={`M257 ${Math.round(561 + i * 9.48) + 0.5}h3`} stroke="#000" />
    ))}
    {xLabels.map((label, i) => {
      const x = 260 + i * 52.3;
      return (
        <g key={label}>
          <path d={`M${Math.round(x) + 0.5} 883v6`} stroke="#000" />
          <text x={x} y="898" textAnchor="middle">{label}</text>
        </g>
      );
    })}
    {Array.from({ length: 41 }).map((_, i) => (
      <path key={i} d={`M${Math.round(260 + i * 10.46) + 0.5} 883v3`} stroke="#000" />
    ))}
    <text x="666" y="898">min</text>
    <path d="M601.5 553V883" stroke="#000" />
    <path d={toPath(chromCurve)} fill="none" stroke="#000" shapeRendering="auto" />
    {[["0.708", 345, 835], ["0.855", 360, 835], ["1.013", 376, 835], ["1.200", 396, 835], ["1.364", 414, 580], ["3.264", 613, 762]].map(([l, x, y]) => (
      <text key={l as string} transform={`rotate(-90 ${x} ${y})`} x={x} y={y}>{l}</text>
    ))}
  </ChartSvg>
);

const PurityChart = () => (
  <ChartSvg width="451" height="266" viewBox="721 532 451 266" shapeRendering="crispEdges">
    <rect x="764" y="548" width="335" height="231" fill="#ffffcc" />
    <path d="M764.5 548V779.5H1099.5V548" fill="none" stroke="#000" />
    <path d="M764 548.5H1099" stroke="#000" />
    <path d="M764 767.5H1099" stroke="#000" />
    <text x="765" y="558">Purity Curve</text>
    <text x="766" y="569" style={{ fill: "#ff0000" }}>Zero Line</text>
    <text x="1096" y="558" textAnchor="end" style={{ fill: "#ff00ff" }}>Peak</text>
    <text x="1105" y="546">mAU</text>
    {[["0.5", 567], ["0.4", 607], ["0.3", 647], ["0.2", 687], ["0.1", 727], ["0.0", 767]].map(([l, y]) => (
      <g key={l}>
        <path d={`M758 ${Number(y) + 0.5}h6`} stroke="#000" />
        <text x="756" y={Number(y) + 4} textAnchor="end">{l}</text>
      </g>
    ))}
    {Array.from({ length: 23 }).map((_, i) => (
      <path key={i} d={`M761 ${Math.round(551 + i * 10) + 0.5}h3`} stroke="#000" />
    ))}
    {[["350", 580], ["300", 608], ["250", 637], ["200", 665], ["150", 694], ["100", 722], ["50", 751], ["0", 779]].map(([l, y]) => (
      <g key={l}>
        <path d={`M1099 ${Number(y) + 0.5}h6`} stroke="#000" />
        <text x="1106" y={Number(y) + 4}>{l}</text>
      </g>
    ))}
    {[["3.25", 842], ["3.50", 953], ["3.75", 1065]].map(([l, x]) => (
      <g key={l}>
        <path d={`M${Number(x) + 0.5} 779v6`} stroke="#000" />
        <text x={x} y="795" textAnchor="middle">{l}</text>
      </g>
    ))}
    {Array.from({ length: 15 }).map((_, i) => (
      <path key={i} d={`M${Math.round(787 + i * 22.2) + 0.5} 779v3`} stroke="#000" />
    ))}
    <text x="1082" y="795">min</text>
    <path d={toPath(purityPeak)} fill="none" stroke="#ff00ff" shapeRendering="auto" />
    <path d={toPath(purityLeft)} fill="none" stroke="#000" shapeRendering="auto" />
    <path d={toPath(purityRight)} fill="none" stroke="#000" shapeRendering="auto" />
  </ChartSvg>
);

const ScrollStack: React.FC<{ top: number; left: number; track: number; before: number; after: number; gap1: number }> = ({
  top, left, track, before, after, gap1,
}) => (
  <SideColumn $top={top} $left={left}>
    <Track $h={track}>
      <ArrowBtn><Tri $dir="up" /></ArrowBtn>
      <TrackSpace $grow={before} />
      <Thumb />
      <TrackSpace $grow={after} />
      <ArrowBtn><Tri $dir="down" /></ArrowBtn>
    </Track>
    <ZoomBtn $mt={gap1}><ZoomGlyph plus /></ZoomBtn>
    <ZoomBtn $mt={1}><ZoomGlyph /></ZoomBtn>
  </SideColumn>
);

const files = [
  "st_THF", "st_THF", "vz1_1.", "vz1_2.", "vz2_1.", "vz2_2.", "vz3_1.",
  "vz3_2.", "vz4_1.", "vz4_2.", "vz5_1.", "vz5_2.", "vz6_1.", "vz6_2.",
];

const menus: [string, string, number][] = [
  ["F", "ile", 27], ["Table ", "Edit", 56], ["V", "iew", 32], ["M", "ethod", 46], ["S", "pectrum", 55],
  ["L", "ayout", 43], ["T", "ools", 35], ["W", "indow", 48], ["H", "elp", 30],
];

export default function App() {
  return (
    <Screen>
      <GlobalStyle />
      <Main>
        <TitleBar>
          <Ico s={17}>
            <rect x="2" y="2" width="20" height="20" fill="#d4d0c8" />
            <rect x="18" y="1" width="5" height="16" fill="#ffff00" stroke="#000" />
            <Mag x={10} y={10} r={7} />
          </Ico>
          <TitleText>LC Postrun Analysis (Admin) - [PDA Data Analysis - st_THF_kys_1b1.lcd]</TitleText>
          <WinButtons $right={4}>
            <WinButton><WinGlyph kind="min" /></WinButton>
            <WinButton><WinGlyph kind="max" /></WinButton>
            <WinButton><WinGlyph kind="close" /></WinButton>
          </WinButtons>
        </TitleBar>
        <MenuBar>
          <Grip $h={19} />
          <MenuIcon><LogoTile /></MenuIcon>
          {menus.map(([a, b, w]) => (
            <MenuItem key={a + b} $w={w}>
              {a === "Table " ? <>Table <u>E</u>dit</> : <><u>{a}</u>{b}</>}
            </MenuItem>
          ))}
          <Spring />
          <WinButtons $right={5}>
            <WinButton><WinGlyph kind="min" /></WinButton>
            <WinButton><WinGlyph kind="max" /></WinButton>
            <WinButton><WinGlyph kind="close" /></WinButton>
          </WinButtons>
        </MenuBar>
        <ToolBar>
          <Grip $h={34} />
          <ToolGap $w={2} />
          <ToolButton><FolderOpen /></ToolButton>
          <ToolButton><Floppy /></ToolButton>
          <ToolSep $l={8} $r={2} />
          <ToolButton $w={31}><Printer /></ToolButton>
          <ToolButton $w={31}><Preview /></ToolButton>
          <ToolSep $l={7} $r={3} />
          <ToolButton $w={31} $pressed><AnalysisA /></ToolButton>
          <ToolButton $w={31}><AnalysisB /></ToolButton>
          <ToolSep $l={4} $r={6} />
          <ToolButton $pressed><LayoutA /></ToolButton>
          <ToolButton><LayoutB /></ToolButton>
          <ToolButton $w={31} $pressed><LayoutC /></ToolButton>
          <ToolSep $l={6} $r={2} />
          <ToolButton><Help /></ToolButton>
          <ToolSep $l={7} $r={0} />
          <ToolGap $w={35} />
          <Grip $h={34} />
          <ToolButton><Undo /></ToolButton>
          <ToolSep $l={6} $r={4} />
          <ToolButton><Stacks /></ToolButton>
          <ToolSep $l={5} $r={4} />
          <ToolButton><GearDisabled /></ToolButton>
          <ToolSep $l={6} $r={2} />
          <ToolButton $w={31}><CurveTable c="#008080" curve="#0000ff" /></ToolButton>
          <ToolButton $w={31}><GrayTable /></ToolButton>
          <ToolButton $w={31}><CurveTable c="#800000" curve="#cc00cc" /></ToolButton>
          <ToolButton $w={31}><ArrowTable /></ToolButton>
          <ToolSep $l={5} $r={5} />
          <ToolButton><ReportPencil /></ToolButton>
          <ToolSep $l={5} $r={4} />
          <ToolButton><ContourTable /></ToolButton>
          <ToolButton $w={31} $pressed><ContourDown /></ToolButton>
          <ToolButton $w={31} $pressed><PeakUp /></ToolButton>
          <ToolSep $l={5} $r={3} />
          <ToolButton $w={31}><ArrowBars /></ToolButton>
          <ToolButton $w={31}><Scope /></ToolButton>
        </ToolBar>
        <Workspace>
          <PdaDock>
            <DockHead $mb={4}>
              <DockGrip $w={53} />
              <DockButton><Tri $dir="down" $c="#808080" /></DockButton>
              <DockButton>✕</DockButton>
            </DockHead>
            <PdaTitle>PDA Data</PdaTitle>
            <PdaList>
              <PdaItem $h={62}><TopArrow />Top</PdaItem>
              <PdaItem $h={62}><ReportPencil s={32} />Analyze</PdaItem>
              <PdaItem $h={62}><DataReport />Data Report</PdaItem>
              <PdaItem $h={75}><ApplyMethod />Apply to<br />Method</PdaItem>
              <PdaItem $h={62}><SpectraIndex />Spectra Index</PdaItem>
              <PdaItem $h={62}><Wizard />Wizard</PdaItem>
            </PdaList>
          </PdaDock>
          <ProjectDock>
            <DockHead $mb={1}>
              <DockGrip $w={38} />
              <DockButton><Tri $dir="down" $c="#808080" /></DockButton>
              <DockButton>✕</DockButton>
            </DockHead>
            <ProjectRow>
              <ProjectLabel>Proje</ProjectLabel>
              <FolderButton><NewFolder /></FolderButton>
              <FolderButton><OpenFolder /></FolderButton>
            </ProjectRow>
            <Combo>
              ...\MP_k
              <ComboArrow><Tri $dir="down" /></ComboArrow>
            </Combo>
            <ListFrame>
              <ListHead>File Name</ListHead>
              <ListBody>
                {files.map((f, i) => (
                  <ListRow key={f + i} $selected={i === 1}><FileGlyph />{f}</ListRow>
                ))}
              </ListBody>
              <HScroll>
                <ArrowBtn $w={15} $h={15}><Tri $dir="left" /></ArrowBtn>
                <HTrack><HThumb /></HTrack>
                <ArrowBtn $w={15} $h={15}><Tri $dir="right" /></ArrowBtn>
              </HScroll>
            </ListFrame>
            <SideTabs>
              <SideTab $active><FileGlyph s={18} /></SideTab>
              <SideTab><BarsDoc /></SideTab>
            </SideTabs>
          </ProjectDock>
          <MdiClient>
            <ChildFrame>
              <View>
                <ViewHead $h={20} $pt={3}><ViewButton />Contour View</ViewHead>
                <ContourChart />
                <ArrowMark>
                  <svg width="15" height="13" viewBox="0 0 15 13">
                    <path d="M0 6.5L7 0v3h8v7H7v3z" fill="#2030c0" stroke="#ffff00" strokeWidth="0.6" />
                  </svg>
                </ArrowMark>
                <HNav>
                  <ArrowBtn><Tri $dir="left" /></ArrowBtn>
                  <ArrowBtn><Tri $dir="right" /></ArrowBtn>
                </HNav>
                <VNav>
                  <ArrowBtn><Tri $dir="up" /></ArrowBtn>
                  <ArrowBtn><Tri $dir="down" /></ArrowBtn>
                </VNav>
              </View>
              <View>
                <ViewHead $h={20} $pt={3}><ViewButton />Spectrum View(Extracted)</ViewHead>
                <ViewBody>
                  <SpectrumChart />
                  <ScrollStack top={21} left={1} track={308} before={147} after={133} gap1={5} />
                </ViewBody>
              </View>
              <View>
                <ViewHead $h={18} $pt={1}>
                  <ViewButton />Chromatogram View
                  <PeakLabel>Peak</PeakLabel>
                  <PeakArrows>
                    <ArrowBtn><Tri $dir="left" /></ArrowBtn>
                    <ArrowBtn><Tri $dir="right" /></ArrowBtn>
                  </PeakArrows>
                </ViewHead>
                <ViewBody>
                  <ChannelStrip>Ch1</ChannelStrip>
                  <ChromChart />
                  <ScrollStack top={22} left={1} track={281} before={125} after={128} gap1={18} />
                </ViewBody>
              </View>
              <View>
                <ViewHead $h={18} $pt={1}><ViewButton />Purity View</ViewHead>
                <ViewBody>
                  <PurityChart />
                  <ScrollStack top={17} left={1} track={196} before={77} after={77} gap1={5} />
                </ViewBody>
                <InfoBox>
                  Impurity : Not Detected.<br />
                  Peak purity index : 1.000000<br />
                  Single point threshold : 0.999971<br />
                  Minimum peak purity index : 28
                </InfoBox>
                <TabStrip>
                  <SlantTab $active $w={70}>Peak Purity</SlantTab>
                  <SlantTab $w={76}>Peak Profile</SlantTab>
                </TabStrip>
              </View>
            </ChildFrame>
            <DocTabs>
              <DocTab><Calib /><DocTabLabel>LC Calibrati...</DocTabLabel></DocTab>
              <DocTab><DataCo /><DocTabLabel>LC Data Co...</DocTabLabel></DocTab>
              <DocTab><ReportGlyph /><DocTabLabel $center>Report</DocTabLabel></DocTab>
              <DocTab><AnalysisTab /><DocTabLabel>LC Data An...</DocTabLabel></DocTab>
              <DocTab $active><LogoTile /><DocTabLabel>PDA Data A...</DocTabLabel></DocTab>
            </DocTabs>
          </MdiClient>
        </Workspace>
        <StatusBar>
          Ready
          <Spring />
          <StatusPane $w={26} />
          <StatusPane $w={28}>NUM</StatusPane>
          <StatusPane $w={30} />
        </StatusBar>
      </Main>
      <Dock>
        <StartButton><StartFlag />Start</StartButton>
        <DockLine $mt={3} />
        <QuickGrid>
          <MailGlyph />
          <IeGlyph />
          <NoteGlyph />
          <CamGlyph />
        </QuickGrid>
        <DockLine $mt={31} />
        <TaskButton><LcSol />LCsol...</TaskButton>
        <TaskButton><LcRe />LC Re...</TaskButton>
        <TaskButton $active><LcPo />LC Po...</TaskButton>
        <TaskButton><WordGlyph />Doku...</TaskButton>
        <Tray>
          10:38
          <TrayIcons>
            <VolumeGlyph />
            <SignalGlyph />
            <NvidiaGlyph />
            <CsGlyph />
            <PlayGlyph />
            <MapGlyph />
          </TrayIcons>
        </Tray>
      </Dock>
    </Screen>
  );
}
